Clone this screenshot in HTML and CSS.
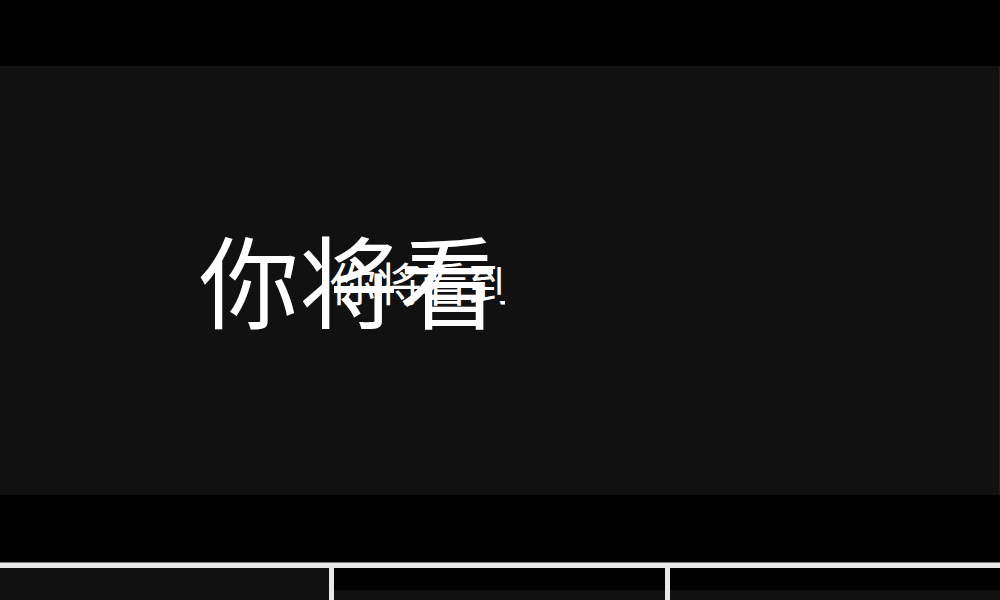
FILE: index.html
```html
<!DOCTYPE html>
<html lang="zh">
<head>
<meta charset="utf-8">
<link rel="stylesheet" href="styles.css">
</head>
<body>
<div class="top"></div>
<main class="stage">
  <div class="clip">
    <div class="big">你将看到精彩的内容</div>
    <div class="small">你将看到</div>
  </div>
</main>
<div class="gap"></div>
<div class="rule"></div>
<div class="cols">
  <div class="col col-a"></div>
  <div class="col col-b"><div class="col-head"></div></div>
  <div class="col col-b"><div class="col-head"></div></div>
</div>
</body>
</html>
```
FILE: styles.css
```css
html, body {
  margin: 0;
  padding: 0;
  background: #000;
  height: 600px;
  overflow: hidden;
  font-family: "Noto Sans CJK SC", "Noto Sans", sans-serif;
  color: #fff;
}
.top {
  height: 66px;
}
.stage {
  height: 429px;
  background: #111;
  display: flex;
  align-items: flex-start;
  border-right: 1px solid #222;
  box-sizing: border-box;
}
.clip {
  position: relative;
  margin-left: 199px;
  margin-top: 147px;
  width: 306px;
  height: 130px;
  overflow: hidden;
}
.big {
  font-size: 100px;
  line-height: 130px;
  width: 302px;
  word-break: break-all;
}
.small {
  position: absolute;
  left: 131px;
  top: 38px;
  font-size: 46px;
  line-height: 60px;
  white-space: nowrap;
}
.gap {
  height: 67px;
}
.rule {
  height: 1px;
  background: #777;
}
.cols {
  display: grid;
  grid-template-columns: 329px 331px 1fr;
  column-gap: 5px;
  background: #e8e8e8;
  padding-top: 5px;
  height: 32px;
}
.col {
  background: #111;
}
.col-head {
  height: 22px;
  background: #000;
}
```
